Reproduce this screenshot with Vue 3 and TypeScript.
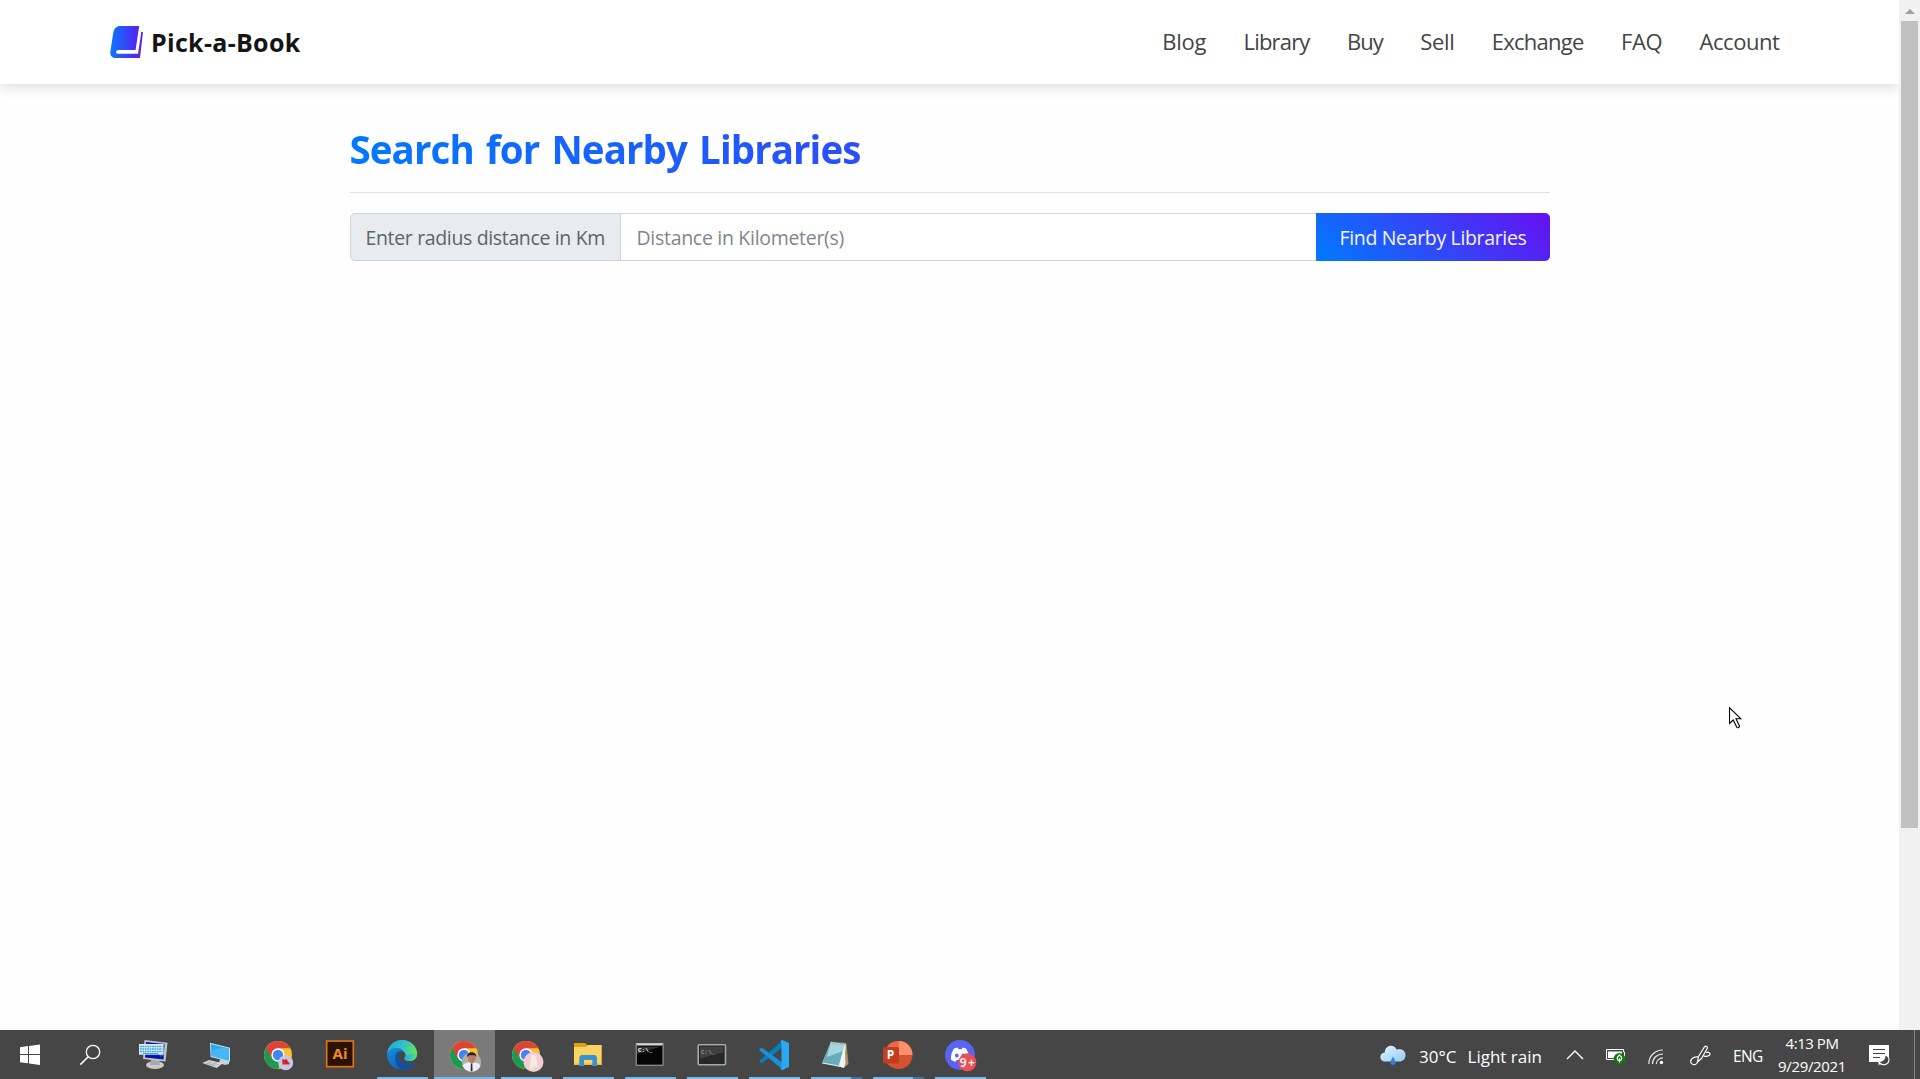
<script setup lang="ts">
import type { Directive } from 'vue'

interface Label { text: string; width: number }
interface Task { name: string; open?: boolean; active?: boolean; stacked?: boolean; badge?: string }

const links: Label[] = [
  { text: 'Blog', width: 44 },
  { text: 'Library', width: 66 },
  { text: 'Buy', width: 36 },
  { text: 'Sell', width: 34 },
  { text: 'Exchange', width: 92 },
  { text: 'FAQ', width: 41 },
  { text: 'Account', width: 80 },
]

const tasks: Task[] = [
  { name: 'keyboard' },
  { name: 'computer' },
  { name: 'chrome', badge: 'red' },
  { name: 'ai' },
  { name: 'edge', open: true },
  { name: 'chrome', badge: 'photo', open: true, active: true },
  { name: 'chrome', badge: 'pink', open: true },
  { name: 'explorer', open: true },
  { name: 'cmd', open: true },
  { name: 'terminal', open: true },
  { name: 'code', open: true },
  { name: 'notepad', open: true, stacked: true },
  { name: 'powerpoint', open: true, stacked: true },
  { name: 'discord', open: true },
]

// Tracks a label so that it fills the given width in pixels.
const vFit: Directive<HTMLElement, number> = {
  mounted(el, binding) {
    const natural = el.getBoundingClientRect().width
    const count = (el.textContent ?? '').length
    el.style.letterSpacing = `${(binding.value - natural) / count}px`
  },
}
</script>

<template>
  <div class="screen">
    <div class="browser">
      <div class="page">
        <header class="navbar">
          <a class="brand">
            <svg width="34" height="34" viewBox="0 0 34 34">
              <defs>
                <linearGradient id="book" x1="0" y1="0" x2="1" y2="0">
                  <stop offset="0" stop-color="#0b78ff" />
                  <stop offset=".75" stop-color="#4a2df2" />
                  <stop offset="1" stop-color="#6a1fe0" />
                </linearGradient>
              </defs>
              <path fill="url(#book)" d="M10.500 1H29.200L25.600 25H8.400C5.800 25 5 28.700 7.800 28.700H28L31.300 6.800L33 6.900L30 33H5.600C2 33 0 30.400.3 27L3.200 8C4 3.500 6.500 1 10.500 1Z" />
            </svg>
            <span v-fit="149.5" class="brand-name">Pick-a-Book</span>
          </a>
          <nav class="links">
            <a v-for="l in links" :key="l.text"><span v-fit="l.width">{{ l.text }}</span></a>
          </nav>
        </header>
        <main class="content">
          <h1><span v-fit="511">Search for Nearby Libraries</span></h1>
          <div class="group">
            <label class="addon"><span v-fit="239.5">Enter radius distance in Km</span></label>
            <div class="field"><span v-fit="207.5">Distance in Kilometer(s)</span></div>
            <button class="find"><span v-fit="187">Find Nearby Libraries</span></button>
          </div>
        </main>
      </div>
      <div class="scrollbar">
        <div class="arrow"><i></i></div>
        <div class="thumb"></div>
      </div>
    </div>

    <footer class="taskbar">
      <svg class="sys" width="60" height="49" viewBox="0 0 60 49">
        <path fill="#fff" d="M20 17.200L28 16V24H20ZM29 15.900L40 14.500V24H29ZM20 25H28V33.200L20 32.200ZM29 25H40V35L29 33.400Z" />
      </svg>
      <svg class="sys search" width="64" height="49" viewBox="0 0 64 49">
        <circle cx="33" cy="22" r="6.700" fill="none" stroke="#fff" stroke-width="1.300" />
        <path d="M28.200 26.800L20.300 34.600" stroke="#fff" stroke-width="1.500" />
      </svg>

      <div v-for="(t, i) in tasks" :key="i" class="task" :class="{ open: t.open, active: t.active, stacked: t.stacked }">
        <svg width="62" height="49" viewBox="0 0 62 49">
          <g v-if="t.name === 'keyboard'">
            <ellipse cx="31" cy="35" rx="9" ry="4" fill="#c9cac8" />
            <path d="M27 29H35L36 35H26Z" fill="#aaa" />
            <path d="M20.500 10L43.500 12.700L41.500 31.500L19 29Z" fill="#c5c6c4" />
            <path d="M22 12L40.500 14L39.500 29.500L21 27.500Z" fill="#0715a8" />
            <path d="M34 13.300L40.500 14L39.800 25L36 27Z" fill="#335ac8" />
            <rect x="15" y="14" width="24.500" height="10.700" fill="#dceaf2" />
            <path d="M16 16.500H38.500M16 19H38.500M16 21.500H38.500" stroke="#35a5df" stroke-width="1.700" stroke-dasharray="1.700 .7" />
            <path d="M19 23.500H34" stroke="#35a5df" />
          </g>
          <g v-else-if="t.name === 'computer'">
            <path d="M34 29L43 31V34L39 35L33 33Z" fill="#c7d0d4" />
            <path d="M24 12.700L44 17.700V31.700L24.600 27Z" fill="#b9e4fa" />
            <path d="M25 14L43 18.500V30.500L25.500 26Z" fill="#2fa6ef" />
            <path d="M25 21L38 17.300L43 18.500V30.500L25.500 26Z" fill="#49b5f8" />
            <path d="M16.300 33L23 30L36.700 33.300L30.700 38Z" fill="#d8dddf" />
            <path d="M19 33L30.500 36M21 31.800L33 34.700M20 35L26 30.500M25 36L31 32" stroke="#929b9f" stroke-width=".6" />
          </g>
          <g v-else-if="t.name === 'chrome'">
            <circle cx="30" cy="25" r="14" fill="#fbc02d" />
            <path d="M30 25L17.880 18A14 14 0 0 0 30 39L36.060 28.500Z" fill="#1b9a51" />
            <path d="M17.880 18A14 14 0 0 1 42.120 18.200H30L23.940 28.500Z" fill="#db4437" />
            <circle cx="30" cy="25" r="6.700" fill="#fff" />
            <circle cx="30" cy="25" r="5.200" fill="#4285f4" />
            <g v-if="t.badge === 'red'">
              <circle cx="37.700" cy="32.700" r="7.500" fill="#c4c9e3" />
              <path d="M34 29L37 30L38 28.500L42 34L40.500 34.500H34.500Z" fill="#e12922" />
              <path d="M36.500 30L39.500 34" stroke="#8e2533" stroke-width=".8" />
            </g>
            <g v-else-if="t.badge === 'photo'">
              <circle cx="37.500" cy="32" r="9.700" fill="#b8b19f" />
              <path d="M28.500 35.500C31 32.500 34 32 37.500 32S44 32.500 46.500 35.500A9.700 9.700 0 0 1 28.500 35.500Z" fill="#eceef5" />
              <ellipse cx="37.800" cy="28" rx="4" ry="5.200" fill="#b77f63" />
              <path d="M33 27C32.500 20.500 43 20.500 42.300 27L40.500 25.300H35Z" fill="#30221d" />
              <path d="M36.900 33.500H38.300L38.600 40.500L37.300 41.500L36.600 40Z" fill="#252f49" />
            </g>
            <g v-else>
              <circle cx="37.500" cy="32" r="10" fill="#f5cbd2" />
              <path d="M37 24.500C40 25 40.500 29 41 32S41 39 38 39.500H34.500C33 38 34 33 34.500 31S35 25 37 24.500Z" fill="#f1eee0" />
              <path d="M36 38H40" stroke="#d9d0b5" />
            </g>
          </g>
          <g v-else-if="t.name === 'ai'">
            <rect x="16.700" y="11" width="26.600" height="25.700" fill="#2a1202" stroke="#dd7214" stroke-width="1.700" />
            <text x="30" y="29" class="ai-text" text-anchor="middle">Ai</text>
          </g>
          <g v-else-if="t.name === 'edge'">
            <defs>
              <linearGradient id="e1" x1="0" y1=".3" x2="1" y2=".6"><stop stop-color="#20a8df" /><stop offset=".5" stop-color="#31c3c6" /><stop offset="1" stop-color="#6be54d" /></linearGradient>
              <linearGradient id="e2" x1="0" y1="0" x2=".5" y2="1"><stop stop-color="#1d9be2" /><stop offset="1" stop-color="#0d61b5" /></linearGradient>
            </defs>
            <circle cx="30" cy="25" r="15" fill="url(#e2)" />
            <path d="M15 24C16 15.500 22.500 10 30 10C39 10 45.200 17 45.200 23.500C45.200 28.500 41.500 31 37.500 31C34 31 32.200 29.800 32.200 28.800C32.200 28 33.500 27.500 33.500 25C33.500 21.500 29.500 18 24.500 18C19.500 18 16.200 20.500 15 24Z" fill="url(#e1)" />
            <path d="M24 24C21.500 31 26 39.500 32 39.800C37 39.500 41 37 43.200 33.300C43.500 32.800 43.100 32.500 42.600 32.700C35 36 26 32.500 26.500 25.500C26.800 22.500 28.500 21.500 29.500 21C27 20.500 25 21.500 24 24Z" fill="#124f9c" />
            <path d="M32.200 28.800C32.200 29.800 34 31 37.500 31C40.500 31 43.500 29.700 44.800 26.500V32.500L43 32.500C36 36 26.500 33 26.500 25.500C26.600 23 28.300 21.500 29.700 21.200C32 21.800 33.500 23.500 33.500 25C33.500 27.500 32.200 28 32.200 28.800Z" fill="#464646" />
            <path d="M45.200 23.500C45.200 28.500 41.500 31 37.500 31C34 31 32.200 29.800 32.200 28.800C32.200 28 33.500 27.500 33.500 25Z" fill="url(#e1)" />
          </g>
          <g v-else-if="t.name === 'explorer'">
            <path d="M16 13H27L29.500 15.500V22H16Z" fill="#dba30f" />
            <path d="M16 17H27.500L30 15H43.700V35H16Z" fill="#fcd462" />
            <path d="M16 33.500H43.700V35H16Z" fill="#efb93d" />
            <path d="M21.300 36V27L23.300 25H37L39 27V36H34.300V30H26V36Z" fill="#3a91d0" />
          </g>
          <g v-else-if="t.name === 'cmd'">
            <rect x="16.200" y="13.500" width="26.800" height="21.700" fill="#050505" stroke="#a8a8a8" />
            <path d="M16.700 14.500H42.500" stroke="#d5d9dc" stroke-width="2" />
            <path d="M17 16.500L41 16.500L17 24Z" fill="#303030" />
            <text x="18" y="21.500" class="prompt white">C:\_</text>
          </g>
          <g v-else-if="t.name === 'terminal'">
            <rect x="16.200" y="14.700" width="27.300" height="20" rx="1" fill="#252728" stroke="#a6a8aa" stroke-width="1.600" />
            <path d="M18 16.500H41.500V23C35 23 30 25 18 29Z" fill="#3e4042" />
            <text x="19" y="24" class="prompt">C:\_</text>
            <circle cx="40" cy="34.700" r=".7" fill="#29a8e1" />
          </g>
          <g v-else-if="t.name === 'code'">
            <path d="M15 31L17.500 33.500L40.500 16V10L38.500 10.500Z" fill="#087cc4" />
            <path d="M15 20L17.500 17.500L40.500 34V40L38.500 39.500Z" fill="#1791da" />
            <path d="M38 10L45 13V37L38 40L36.500 39L37.500 37V13L36.500 11Z" fill="#2aa9f1" />
          </g>
          <g v-else-if="t.name === 'notepad'">
            <path d="M25 12.500L40.500 14L42.500 34L37.500 38L28 35Z" fill="#ad935f" />
            <path d="M25 12L40 14L37.500 37.500L16 33.500Z" fill="#dbecee" />
            <path d="M24.500 13L38.500 15L33 35.500L16.500 32.500Z" fill="#66adb9" />
            <path d="M24.500 13L38.500 15L37 21L21 27Z" fill="#a3d7df" />
            <path d="M38.500 15L33 35.500L38 38L39.500 33Z" fill="#edf4f3" />
            <path d="M24.500 12.500L40 14" stroke="#a7b1b3" stroke-width="2" stroke-dasharray="1 .6" />
          </g>
          <g v-else-if="t.name === 'powerpoint'">
            <circle cx="30.500" cy="25" r="14" fill="#d6532f" />
            <path d="M30.500 11A14 14 0 0 1 44.500 25H30.500Z" fill="#ff8f6b" />
            <path d="M30.500 11V25H16.500A14 14 0 0 1 30.500 11Z" fill="#eb6b48" />
            <rect x="15" y="17" width="16" height="16.500" rx="1.500" fill="#c23c1d" />
            <text x="22.500" y="29.300" class="ppt-text" text-anchor="middle">P</text>
          </g>
          <g v-else>
            <circle cx="30" cy="25" r="15" fill="#5865f2" />
            <path d="M24 18.500L27.700 17.500L28.600 19.200H31.600L32.500 17.500L36 18.500C38.200 22 39.500 25.500 38.900 29.800C37.500 31 36 31.500 34.600 31.900L33.500 30H26.500L25.400 31.900C24 31.500 22.500 31 21.100 29.800C20.600 25.500 21.700 22 24 18.500Z" fill="#fff" />
            <ellipse cx="26.800" cy="25.500" rx="1.800" ry="2" fill="#5865f2" />
            <ellipse cx="33.300" cy="25.500" rx="1.800" ry="2" fill="#5865f2" />
            <circle cx="37.300" cy="32.300" r="9" fill="#ed4f55" />
            <text x="37.300" y="36.500" class="count" text-anchor="middle" textLength="15">9+</text>
          </g>
        </svg>
      </div>

      <div class="tray">
        <svg class="weather" width="26" height="22" viewBox="0 0 26 22">
          <defs><linearGradient id="cl" x1="0" y1="0" x2="1" y2="1"><stop stop-color="#e3f4ff" /><stop offset="1" stop-color="#93c9f4" /></linearGradient></defs>
          <circle cx="19.500" cy="10" r="6" fill="#b9ddfa" />
          <path d="M5.500 16.500C-1.500 16.500-1 7.500 4.800 7.500C5-1 15.500-1 17 5.500C19 4 25.500 6 25.300 11C25 15 22 16.500 19 16.500Z" fill="url(#cl)" />
          <path d="M13 11.500C14 14 16 16 15.500 18.200C15 20.500 11 20.500 10.500 18.200C10 16 12 14 13 11.500Z" fill="#2f83d8" />
        </svg>
        <span class="temp"><span v-fit="37.500">30°C</span></span>
        <span class="rain"><span v-fit="74.500">Light rain</span></span>
        <svg class="chev" width="18" height="10" viewBox="0 0 18 10"><path d="M1 9L9 1L17 9" fill="none" stroke="#fff" stroke-width="1.400" /></svg>
        <svg class="battery" width="20" height="16" viewBox="0 0 20 16">
          <path d="M.5.500H17.500V3H18.500V8H17.500V10.500H.5Z" fill="none" stroke="#fff" />
          <path d="M2 2.500H16V9H2Z" fill="#fff" />
          <circle cx="13.500" cy="9.700" r="5.800" fill="#107c10" />
          <path d="M13.500 6C16.500 8.500 16.500 11 13.500 12C10.500 11 10.500 8.500 13.500 6ZM13.500 9V13.500" fill="none" stroke="#fff" stroke-width="1.200" />
        </svg>
        <svg class="wifi" width="16" height="16" viewBox="0 0 16 16">
          <g fill="none" stroke="#e5e5e5" stroke-width="1.200">
            <path d="M.8 15C.8 7 7 1 15 1M4.500 15C4.500 9 9 5 15 5M8.300 15C8.300 11.500 11.500 8.800 15 8.800" />
          </g>
          <circle cx="13.500" cy="13.500" r="1.700" fill="#fff" />
        </svg>
        <svg class="pen" width="21" height="21" viewBox="0 0 21 21">
          <g fill="none" stroke="#fff" stroke-width="1.200">
            <path d="M7.500 17L8.500 11.500L14.500 1.800C15.500.3 18.200 1.700 17.200 3.500L11.500 13.500Z" />
            <path d="M16 7.500C19 6.500 21.500 9 19 10.500C17 12 14 11 13.500 11M8.500 12C1.500 11.500-.5 16 1.500 18.500C3 20.500 7 20 7.500 17" />
          </g>
        </svg>
        <span class="lang"><span v-fit="29.500">ENG</span></span>
        <div class="clock">
          <div><span v-fit="53">4:13 PM</span></div>
          <div><span v-fit="68">9/29/2021</span></div>
        </div>
        <svg class="notes" width="21" height="21" viewBox="0 0 21 21">
          <path d="M0 0H20V17H13L9.500 20.500V17H0Z" fill="#fff" />
          <path d="M4 4.500H16M4 8.500H16M4 12.500H11" stroke="#464646" stroke-width="1.200" />
          <path d="M16 10C16 14 13.500 16.500 9.800 16.500C12 21.500 20 20.500 20 14.500C20 12.500 18 10.500 16 10Z" fill="#464646" stroke="#fff" stroke-width="1.100" />
        </svg>
        <i class="peek"></i>
      </div>
    </footer>

    <svg class="cursor" width="14" height="23" viewBox="0 0 14 23">
      <path d="M.5.800V16.500L4.200 13L7.800 20.200C8.500 21.300 11 20.300 10.400 18.700L7 11.700H11.800Z" fill="#fff" stroke="#000" stroke-width="1.100" />
    </svg>
  </div>
</template>

<style>
body { margin: 0; overflow: hidden; }
</style>

<style scoped>
.screen {
  position: relative;
  display: flex;
  flex-direction: column;
  width: 1920px;
  height: 1079px;
  overflow: hidden;
  background: #fefefe;
  font-family: 'Open Sans', 'Noto Sans', sans-serif;
}
span { white-space: nowrap; }
.browser { display: flex; height: 1030px; }
.page { flex: 1; overflow: hidden; }
.navbar {
  display: flex;
  justify-content: space-between;
  align-items: center;
  box-sizing: border-box;
  height: 84px;
  padding: 0 119.500px 0 110px;
  background: #fff;
  box-shadow: 0 4px 12px rgba(0, 0, 0, .12);
}
.brand { display: flex; align-items: center; gap: 7px; color: #151515; }
.brand-name { font-size: 25px; font-weight: 700; line-height: 34px; }
.links { display: flex; gap: 37.400px; color: #444; font-size: 22px; line-height: 34px; margin-top: -2px; }
.content { width: 1200px; margin: 0 auto; }
h1 {
  box-sizing: border-box;
  height: 109px;
  margin: 0 0 20px;
  padding-top: 36px;
  border-bottom: 1px solid #dfe0e1;
  font-size: 38.500px;
  font-weight: 700;
  line-height: 58px;
  word-spacing: 3px;
}
h1 span {
  display: inline-block;
  background: linear-gradient(45deg, #007bff, #6610f2) 0 0 / 1200px 58px;
  -webkit-background-clip: text;
  background-clip: text;
  color: transparent;
}
.group { display: flex; height: 48px; font-size: 19.500px; line-height: 48px; }
.addon {
  box-sizing: border-box;
  width: 271px;
  padding-left: 15px;
  border: 1px solid #ced4da;
  border-radius: 5px 0 0 5px;
  background: #e9ecef;
  color: #5c6369;
}
.field {
  box-sizing: border-box;
  flex: 1;
  padding-left: 16px;
  border: 1px solid #ced4da;
  border-width: 1px 0;
  background: #fff;
  color: #7f868c;
}
.find {
  width: 234px;
  padding: 2px 0 0 1px;
  border: 0;
  border-radius: 0 5px 5px 0;
  background: linear-gradient(45deg, #007bff, #6610f2);
  color: #f4f4ff;
  font: inherit;
  line-height: 46px;
}
.scrollbar { width: 21px; background: #f1f1f1; }
.arrow { display: flex; justify-content: center; align-items: center; height: 21px; padding-top: 1px; box-sizing: border-box; }
.arrow i { border: 5px solid transparent; border-top: 0; border-bottom-color: #a0a0a0; }
.thumb { width: 17px; height: 807px; margin: 0 auto; background: #c1c1c1; }

.taskbar { display: flex; height: 49px; background: #464646; color: #fff; }
.taskbar svg { display: block; flex: none; }
.task { display: flex; flex-direction: column; width: 62px; height: 49px; }
.task svg { margin-bottom: -2px; }
.task.active { box-sizing: border-box; border-right: 1px solid #464646; background: #7a7a7a; }
.task.open::after { content: ''; width: 51px; height: 2px; margin-left: 5px; background: #76b9ed; }
.task.active::after { width: 61px; margin-left: 0; }
.task.stacked::after { background: linear-gradient(90deg, #76b9ed 40px, #47749c 40px); }
.ai-text { fill: #f58a22; font: 700 15px 'Open Sans', sans-serif; }
.prompt { fill: #bbb; font: 6px 'Liberation Mono', monospace; }
.prompt.white { fill: #fff; font-weight: 700; }
.ppt-text { fill: #fff; font: 700 12px 'Open Sans', sans-serif; }
.count { fill: #fff; font: 600 12px 'Open Sans', sans-serif; }

.tray { display: flex; align-items: center; flex: 1; margin-left: 388px; }
.weather { margin-top: 3px; }
.temp, .rain { padding-top: 4px; font-size: 17px; line-height: 24px; }
.temp { width: 48.500px; margin-left: 13px; }
.rain { width: 98.500px; }
.chev { margin: 1px 22px 0 0; }
.battery { margin: 5px 22px 0 0; }
.wifi { margin: 5px 26px 0 0; }
.pen { margin: 1px 22px 0 0; }
.lang { width: 44px; padding-top: 2px; font-size: 15.500px; }
.clock { width: 70px; font-size: 15px; line-height: 23px; text-align: center; }
.peek { width: 1px; height: 49px; margin-right: 5px; background: #858585; }
.notes { margin: 2px auto 0 22px; }

.cursor { position: absolute; left: 1729px; top: 707px; }
</style>
